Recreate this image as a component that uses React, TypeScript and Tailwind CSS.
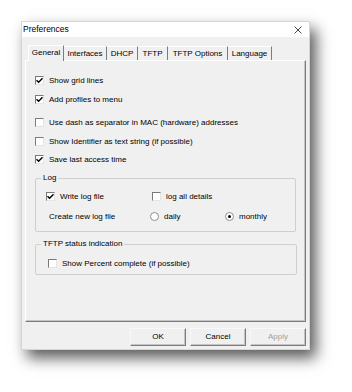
import type { ReactNode } from 'react';

const Check = ({ checked }: { checked?: boolean }) => (
  <div className="w-[9px] h-[9px] shrink-0 bg-white border border-t-[#7a7a7a] border-l-[#7a7a7a] border-r-[#e4e4e4] border-b-[#e4e4e4] flex items-center justify-center">
    {checked && (
      <svg width="7" height="7" viewBox="0 0 7 7">
        <path d="M0.5 3.2 L2.6 5.3 L6.5 1.2" stroke="#000" strokeWidth="1.4" fill="none" />
      </svg>
    )}
  </div>
);

const Radio = ({ checked }: { checked?: boolean }) => (
  <div className="w-[9px] h-[9px] shrink-0 rounded-full bg-white border border-[#8f8f8f] flex items-center justify-center">
    {checked && <div className="w-[3px] h-[3px] rounded-full bg-black" />}
  </div>
);

const Row = ({ checked, label, className = '' }: { checked?: boolean; label: string; className?: string }) => (
  <div className={`flex items-center h-[13px] gap-[5px] ${className}`}>
    <Check checked={checked} />
    <span>{label}</span>
  </div>
);

const Group = ({ title, className, children }: { title: string; className: string; children: ReactNode }) => (
  <div className={`relative border border-[#cfcfcf] rounded-[2px] ${className}`}>
    <span className="absolute -top-[7px] left-[5px] px-[2px] bg-[#f0f0f0] leading-[12px]">{title}</span>
    {children}
  </div>
);

const tabs = [
  { name: 'Interfaces', w: 'w-[43px]' },
  { name: 'DHCP', w: 'w-[31px]' },
  { name: 'TFTP', w: 'w-[30px]' },
  { name: 'TFTP Options', w: 'w-[60px]' },
  { name: 'Language', w: 'w-[44px]' },
];

const Button = ({ label, disabled }: { label: string; disabled?: boolean }) => (
  <div
    className={`w-[56px] h-[18px] flex items-center justify-center border border-t-[#f8f8f8] border-l-[#f8f8f8] border-r-[#7c7c7c] border-b-[#7c7c7c] shadow-[inset_-1px_-1px_0_#c4c4c4] bg-[#f0f0f0] ${disabled ? 'text-[#a0a0a0]' : 'text-black'}`}
  >
    {label}
  </div>
);

export default function App() {
  return (
    <div className="w-[352px] h-[392px] bg-white pt-[21px] pl-[21px] font-['Liberation_Sans',Arial,sans-serif] text-[8px] text-black">
      <div className="w-[289px] h-[329px] flex flex-col bg-[#f0f0f0] border border-[#d6d6d6] shadow-[6px_8px_14px_rgba(0,0,0,0.65)]">
        <div className="h-[15px] bg-white flex items-center justify-between pl-[1px] pr-[7px] text-[8.5px]">
          <span>Preferences</span>
          <svg width="8" height="8" viewBox="0 0 8 8">
            <path d="M0.5 0.5 L7.5 7.5 M7.5 0.5 L0.5 7.5" stroke="#333" strokeWidth="0.9" />
          </svg>
        </div>

        <div className="px-[3px] mt-[7px]">
          <div className="flex items-end h-[16px] pl-[3px]">
            <div className="w-[36px] h-[16px] -mb-px relative z-10 flex items-center justify-center bg-[#f0f0f0] border-t border-l border-t-white border-l-white border-r-[1px] border-r-[#7c7c7c] pb-[1px]">
              General
            </div>
            {tabs.map((t) => (
              <div
                key={t.name}
                className={`${t.w} h-[14px] flex items-center justify-center border-t border-t-white border-r border-r-[#7c7c7c]`}
              >
                {t.name}
              </div>
            ))}
          </div>

          <div className="h-[262px] border border-t-white border-l-white border-r-[#7c7c7c] border-b-[#7c7c7c] shadow-[inset_-1px_-1px_0_#c4c4c4] pl-[9px] pt-[13px]">
            <Row checked label="Show grid lines" />
            <Row checked label="Add profiles to menu" className="mt-[6px]" />
            <Row label="Use dash as separator in MAC (hardware) addresses" className="mt-[10px]" />
            <Row label="Show Identifier as text string (if possible)" className="mt-[6px]" />
            <Row checked label="Save last access time" className="mt-[5px]" />

            <Group title="Log" className="mt-[12px] w-[261px] h-[54px] pt-[11px] pl-[10px]">
              <div className="flex items-center h-[13px]">
                <div className="w-[106px] flex items-center gap-[5px]">
                  <Check checked />
                  <span>Write log file</span>
                </div>
                <div className="flex items-center gap-[5px]">
                  <Check />
                  <span>log all details</span>
                </div>
              </div>
              <div className="flex items-center h-[13px] mt-[7px]">
                <span className="w-[104px] pl-[3px]">Create new log file</span>
                <div className="w-[75px] flex items-center gap-[5px]">
                  <Radio />
                  <span>daily</span>
                </div>
                <div className="flex items-center gap-[5px]">
                  <Radio checked />
                  <span>monthly</span>
                </div>
              </div>
            </Group>

            <Group title="TFTP status indication" className="mt-[12px] w-[262px] h-[31px] pt-[12px] pl-[12px]">
              <div className="flex items-center h-[13px] gap-[5px]">
                <Check />
                <span>Show Percent complete (if possible)</span>
              </div>
            </Group>
          </div>

          <div className="flex justify-end gap-[4px] mt-[6px]">
            <Button label="OK" />
            <Button label="Cancel" />
            <Button label="Apply" disabled />
          </div>
        </div>
      </div>
    </div>
  );
}
